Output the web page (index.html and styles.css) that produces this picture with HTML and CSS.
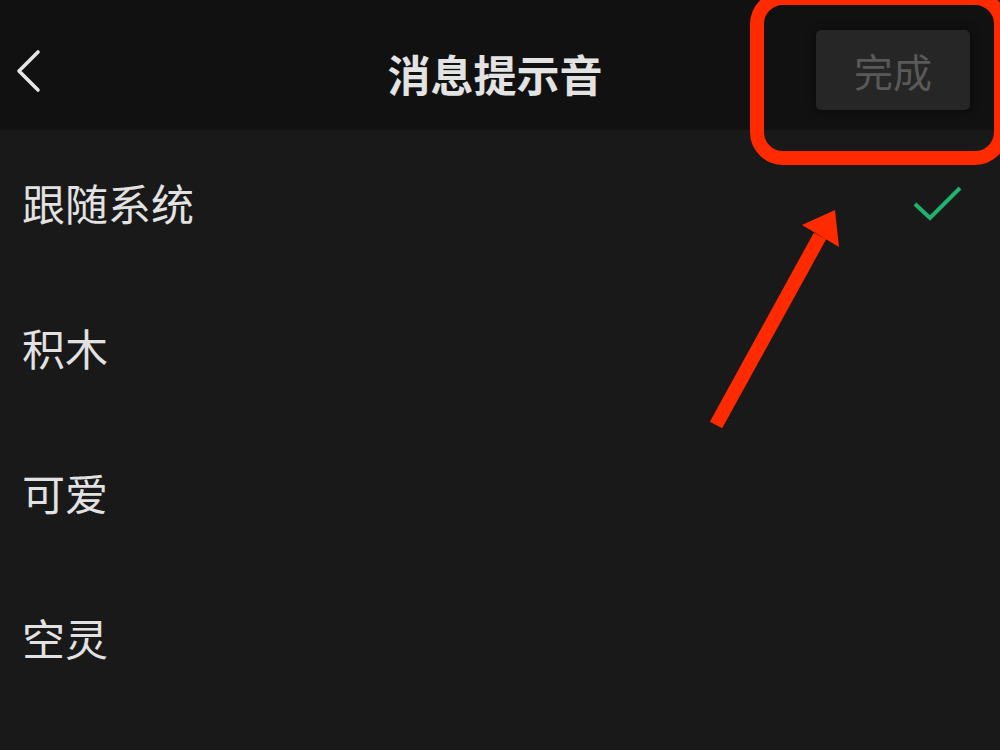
FILE: index.html
```html
<!DOCTYPE html>
<html lang="zh-CN">
<head>
    <meta charset="UTF-8">
    <meta name="viewport" content="width=device-width, initial-scale=1.0">
    <title>消息提示音</title>
    <link rel="stylesheet" href="styles.css">
</head>
<body>

    <div class="page">
        <header class="nav-bar">
            <button class="back-btn" aria-label="返回">
                <svg width="30" height="46" viewBox="0 0 30 46">
                    <polyline points="24,4 5,23 24,42" fill="none" stroke="#e6e6e6" stroke-width="3.6" stroke-linecap="round" stroke-linejoin="round"/>
                </svg>
            </button>
            <h1 class="nav-title">消息提示音</h1>
            <button class="done-btn">完成</button>
        </header>

        <ul class="sound-list">
            <li class="sound-item">
                <span>跟随系统</span>
                <svg class="check" width="52" height="38" viewBox="0 0 52 38">
                    <polyline points="3,19 18,33 48,3" fill="none" stroke="#20b26b" stroke-width="4"/>
                </svg>
            </li>
            <li class="sound-item"><span>积木</span></li>
            <li class="sound-item"><span>可爱</span></li>
            <li class="sound-item"><span>空灵</span></li>
        </ul>

        <!-- red markup drawn over the screen -->
        <svg class="markup" width="1000" height="750" viewBox="0 0 1000 750">
            <rect x="757" y="-2" width="244" height="160" rx="26" ry="26" fill="none" stroke="#ff2a00" stroke-width="14"/>
            <line x1="716" y1="425" x2="820" y2="236" stroke="#ff2a00" stroke-width="14"/>
            <polygon points="835,210 802,225 839,247" fill="#ff2a00"/>
        </svg>
    </div>

</body>
</html>
```

FILE: styles.css
```css
* {
    box-sizing: border-box;
}
body {
    margin: 0;
    padding: 0;
    background-color: #191919;
    font-family: 'Noto Sans CJK SC', 'Noto Sans', sans-serif;
}
.page {
    position: relative;
    width: 1000px;
    height: 750px;
    overflow: hidden;
}
.nav-bar {
    height: 130px;
    background-color: #111111;
    display: grid;
    grid-template-columns: 1fr auto 1fr;
    align-items: center;
}
.back-btn {
    justify-self: start;
    margin-left: 14px;
    margin-top: 12px;
    background: none;
    border: none;
    padding: 0;
    display: flex;
}
.nav-title {
    margin: 16px 0 0 -10px;
    font-size: 43px;
    font-weight: 700;
    color: #e3e3e3;
}
.done-btn {
    justify-self: end;
    margin-right: 30px;
    margin-top: 10px;
    width: 154px;
    height: 80px;
    border: none;
    border-radius: 5px;
    background-color: #262626;
    color: #595959;
    font-family: inherit;
    font-size: 39px;
    padding: 0;
    box-shadow: 0 0 8px rgba(0, 0, 0, 0.6);
}
.sound-list {
    list-style: none;
    margin: 0;
    padding: 0;
}
.sound-item {
    height: 145px;
    padding: 0 36px 0 22px;
    display: flex;
    align-items: center;
    justify-content: space-between;
    font-size: 43px;
    color: #e2e2e2;
}
.sound-item span {
    margin-top: -2px;
}
.check {
    margin-top: 2px;
}
.markup {
    position: absolute;
    top: 0;
    left: 0;
    pointer-events: none;
}
```
